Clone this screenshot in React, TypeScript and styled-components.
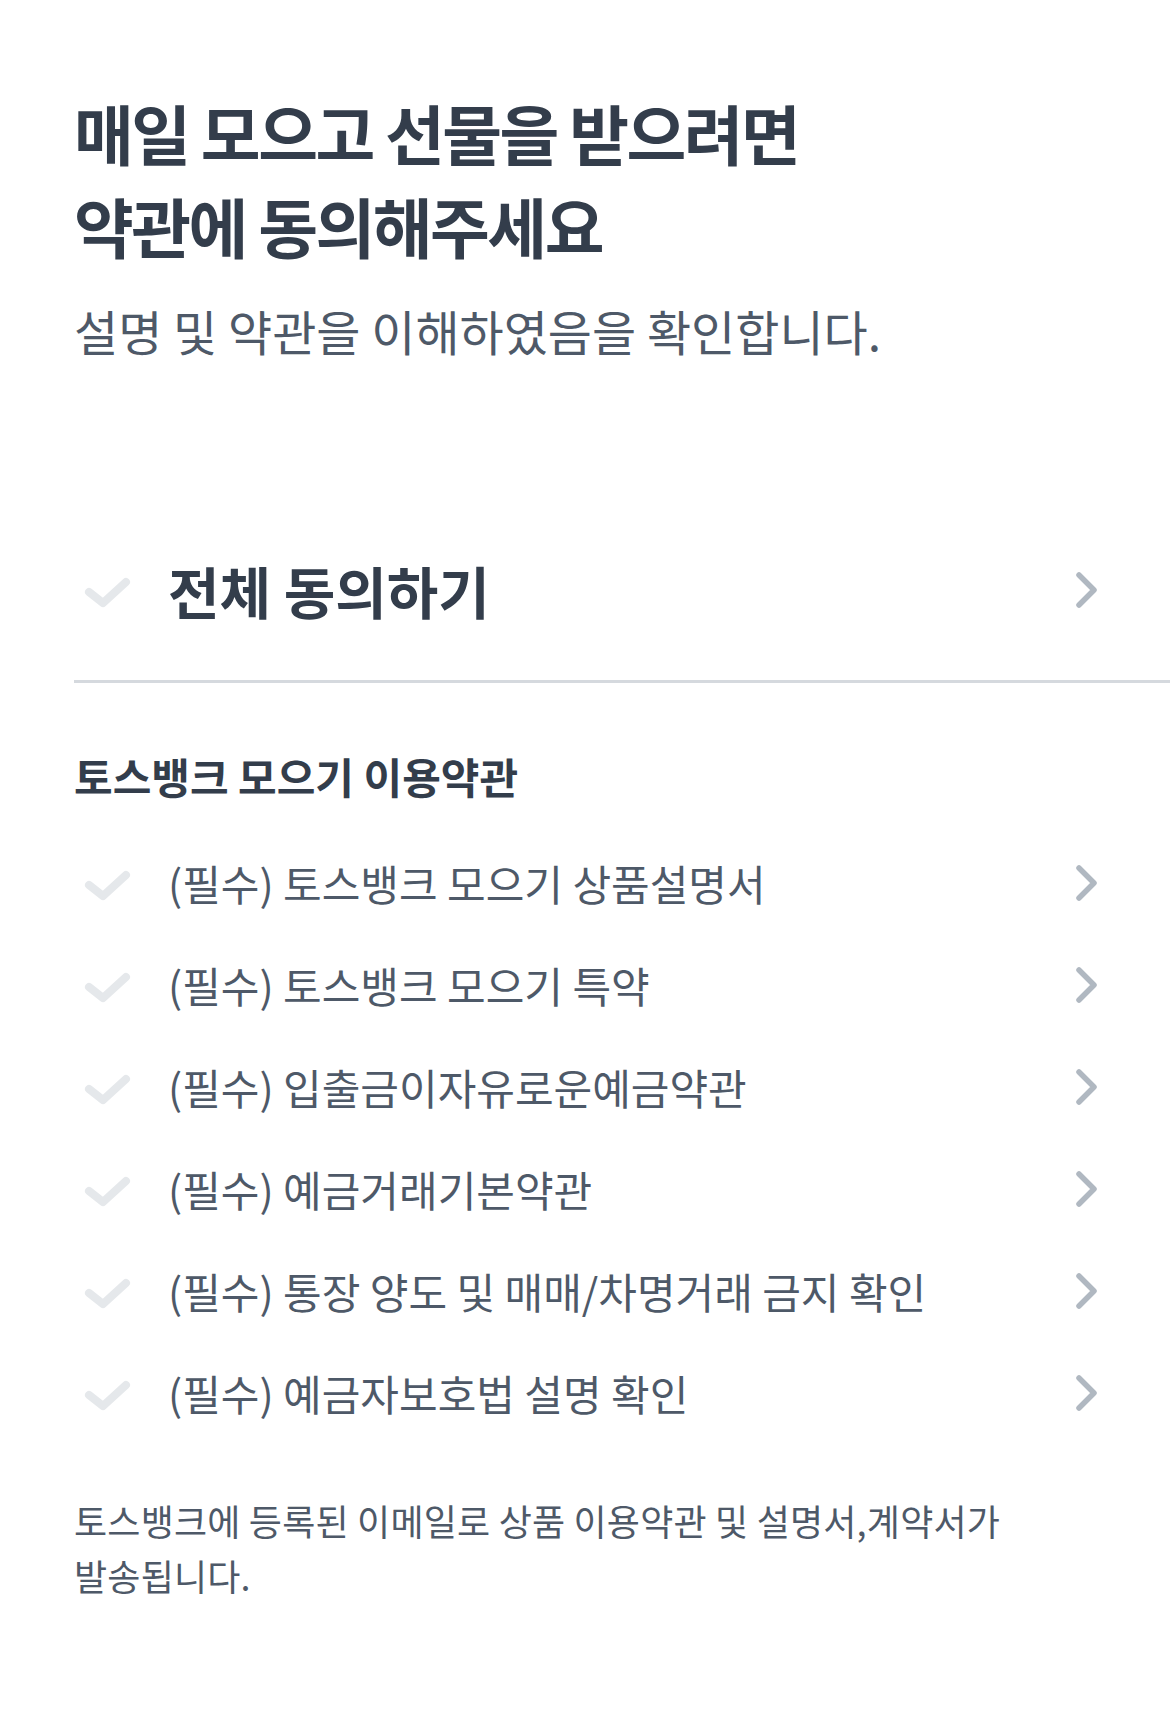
import React from "react";
import styled, { createGlobalStyle } from "styled-components";

const GlobalStyle = createGlobalStyle`
  html, body {
    margin: 0;
    padding: 0;
    background: #ffffff;
  }
  body {
    font-family: "Noto Sans CJK KR", "Noto Sans", sans-serif;
    -webkit-font-smoothing: antialiased;
  }
  * { box-sizing: border-box; }
`;

const Page = styled.main`
  width: 1170px;
  min-height: 1730px;
  background: #ffffff;
  padding-top: 86px;
  padding-left: 74px;
  display: flex;
  flex-direction: column;
`;

const Title = styled.h1`
  margin: 0;
  font-size: 65px;
  line-height: 93px;
  font-weight: 700;
  letter-spacing: -2.5px;
  color: #333d4b;
`;

const Subtitle = styled.p`
  margin: 28px 0 0;
  font-size: 48px;
  line-height: 60px;
  font-weight: 400;
  letter-spacing: 0;
  color: #4e5968;
`;

const AgreeRow = styled.button<{ $big?: boolean }>`
  all: unset;
  box-sizing: border-box;
  display: flex;
  align-items: center;
  width: 100%;
  height: ${(p) => (p.$big ? 100 : 102)}px;
  padding-left: 10px;
  padding-right: 73px;
  cursor: pointer;
`;

const AgreeAllRow = styled(AgreeRow)`
  margin-top: 180px;
`;

const CheckBox = styled.span`
  display: flex;
  width: 48px;
  height: 40px;
  margin-right: 36px;
  flex-shrink: 0;
`;

const Label = styled.span<{ $big?: boolean }>`
  flex: 1;
  font-size: ${(p) => (p.$big ? 56 : 42)}px;
  font-weight: ${(p) => (p.$big ? 700 : 400)};
  letter-spacing: 0;
  color: ${(p) => (p.$big ? "#333d4b" : "#4e5968")};
  line-height: 1.3;
  white-space: nowrap;
`;

const ChevronBox = styled.span`
  display: flex;
  width: 24px;
  height: 40px;
  flex-shrink: 0;
`;

const Divider = styled.hr`
  margin: 40px 0 0;
  border: none;
  height: 3px;
  background: #d5d9de;
`;

const SectionTitle = styled.h2`
  margin: 65px 0 28px;
  font-size: 42px;
  line-height: 56px;
  font-weight: 700;
  letter-spacing: 0;
  color: #333d4b;
`;

const List = styled.ul`
  margin: 0;
  padding: 0;
  list-style: none;
  display: flex;
  flex-direction: column;
`;

const Footer = styled.p`
  margin: 49px 0 0;
  padding-right: 74px;
  font-size: 36px;
  line-height: 55px;
  font-weight: 400;
  letter-spacing: 0.2px;
  word-break: keep-all;
  color: #4e5968;
`;

const Check = () => (
  <CheckBox>
    <svg width="48" height="40" viewBox="0 0 48 40" fill="none">
      <path
        d="M5 22 L19 33 L42 12"
        stroke="#e5e8eb"
        strokeWidth="8"
        strokeLinecap="round"
        strokeLinejoin="round"
      />
    </svg>
  </CheckBox>
);

const Chevron = () => (
  <ChevronBox>
    <svg width="24" height="40" viewBox="0 0 24 40" fill="none">
      <path
        d="M6 5 L21 20 L6 35"
        stroke="#b0b8c1"
        strokeWidth="5.5"
        strokeLinecap="round"
        strokeLinejoin="round"
      />
    </svg>
  </ChevronBox>
);

const terms = [
  "(필수) 토스뱅크 모으기 상품설명서",
  "(필수) 토스뱅크 모으기 특약",
  "(필수) 입출금이자유로운예금약관",
  "(필수) 예금거래기본약관",
  "(필수) 통장 양도 및 매매/차명거래 금지 확인",
  "(필수) 예금자보호법 설명 확인",
];

export default function App() {
  return (
    <>
      <GlobalStyle />
      <Page>
        <Title>
          매일 모으고 선물을 받으려면
          <br />
          약관에 동의해주세요
        </Title>
        <Subtitle>설명 및 약관을 이해하였음을 확인합니다.</Subtitle>

        <AgreeAllRow $big>
          <Check />
          <Label $big>전체 동의하기</Label>
          <Chevron />
        </AgreeAllRow>
        <Divider />

        <SectionTitle>토스뱅크 모으기 이용약관</SectionTitle>
        <List>
          {terms.map((t) => (
            <li key={t}>
              <AgreeRow>
                <Check />
                <Label>{t}</Label>
                <Chevron />
              </AgreeRow>
            </li>
          ))}
        </List>

        <Footer>
          토스뱅크에 등록된 이메일로 상품 이용약관 및 설명서,계약서가 발송됩니다.
        </Footer>
      </Page>
    </>
  );
}
